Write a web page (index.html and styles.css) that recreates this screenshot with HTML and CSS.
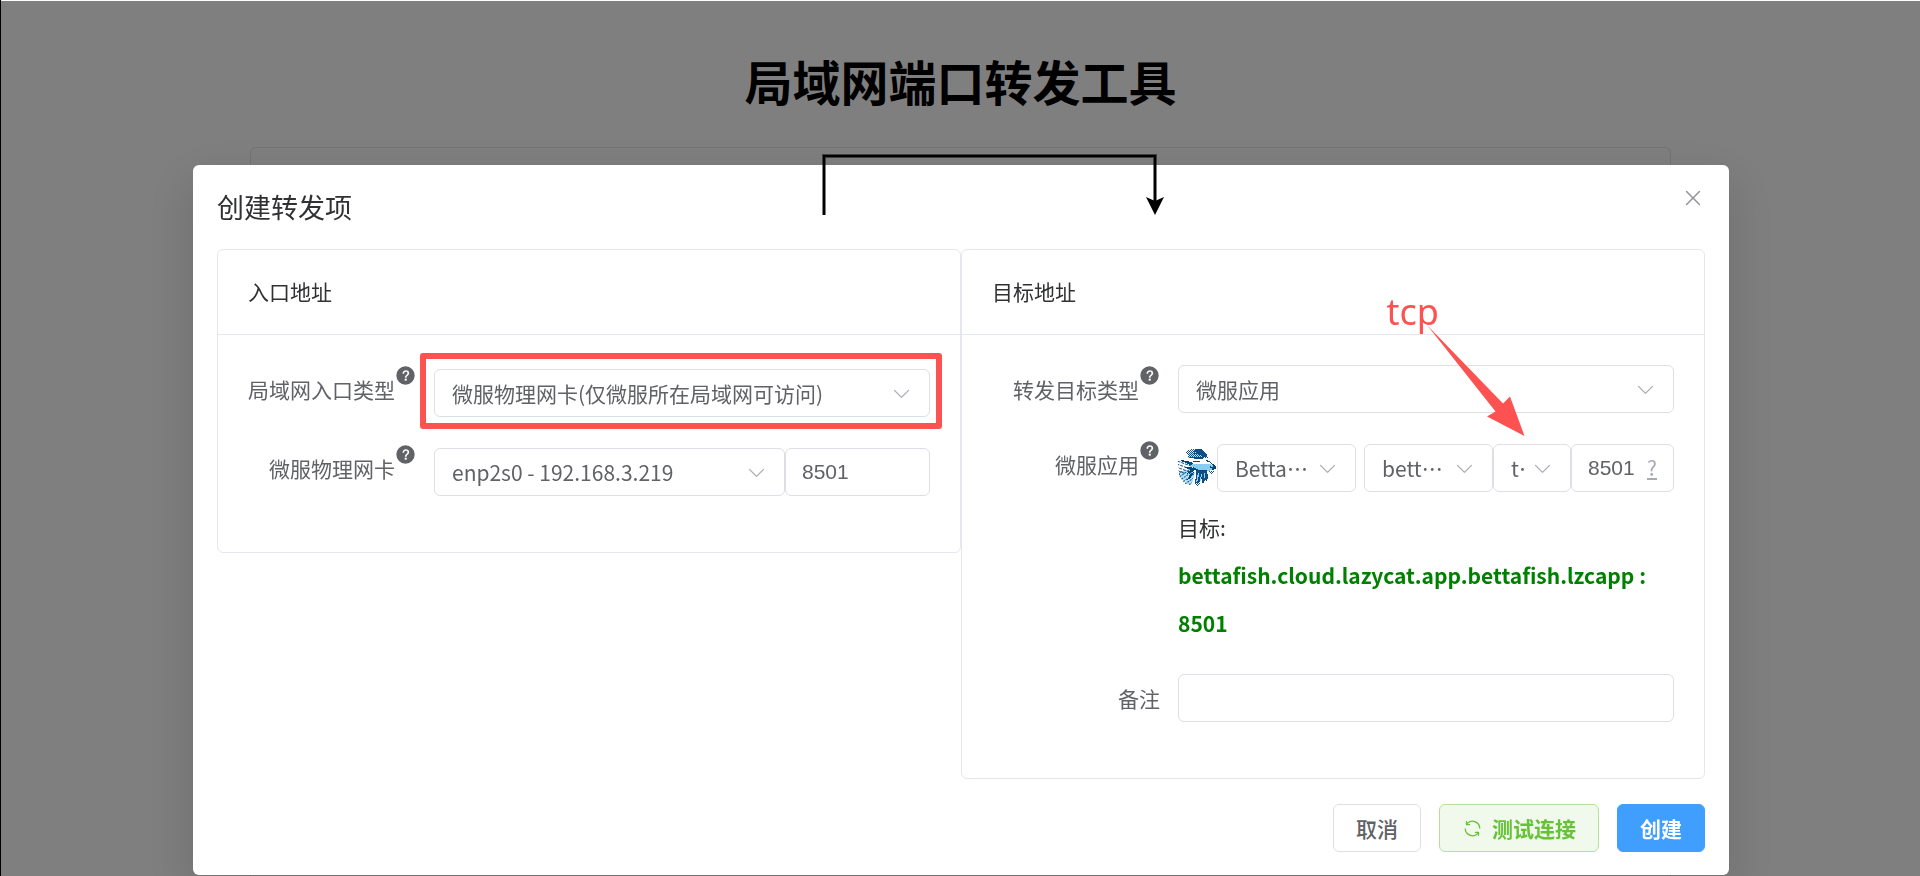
FILE: index.html
```html
<!DOCTYPE html>
<html lang="zh-CN">
<head>
<meta charset="utf-8">
<meta name="viewport" content="width=device-width, initial-scale=1">
<title>局域网端口转发工具</title>
<link rel="stylesheet" href="styles.css">
</head>
<body>
<svg class="defs" aria-hidden="true">
  <symbol id="chevron" viewBox="0 0 1024 1024"><path d="M831.872 340.864 512 652.672 192.128 340.864a30.592 30.592 0 0 0-42.752 0 29.12 29.12 0 0 0 0 41.6L489.664 714.24a32 32 0 0 0 44.672 0l340.288-331.712a29.12 29.12 0 0 0 0-41.728 30.592 30.592 0 0 0-42.752 0z"/></symbol>
  <symbol id="help" viewBox="0 0 1024 1024"><path d="M512 64a448 448 0 1 1 0 896 448 448 0 0 1 0-896m23.744 191.488c-52.096 0-92.928 14.784-123.2 44.352-30.976 29.568-45.76 70.4-45.76 122.496h80.256c0-29.568 5.632-52.8 17.6-68.992 13.376-19.712 35.2-28.864 66.176-28.864 23.936 0 42.944 6.336 56.32 19.712 12.672 13.376 19.712 31.68 19.712 54.912 0 17.6-6.336 34.496-19.008 49.984l-8.448 9.856c-45.76 40.832-73.216 70.4-82.368 89.408-9.856 19.008-14.08 42.24-14.08 68.992v9.856h80.96v-9.856c0-16.896 3.52-31.68 10.56-45.76 6.336-12.672 15.488-24.64 28.16-35.2 33.792-29.568 54.208-48.576 60.544-55.616 16.896-22.528 26.048-51.392 26.048-86.592 0-42.944-14.08-76.736-42.24-101.376-28.16-25.344-65.472-37.312-111.232-37.312m-12.672 406.208a54.272 54.272 0 0 0-38.72 14.784 49.408 49.408 0 0 0-15.488 38.016c0 15.488 4.928 28.16 15.488 38.016A54.848 54.848 0 0 0 523.072 768c15.488 0 28.16-4.928 38.72-14.784a51.52 51.52 0 0 0 16.192-38.72 51.968 51.968 0 0 0-15.488-38.016 55.936 55.936 0 0 0-39.424-14.784z"/></symbol>
</svg>

<main class="page">
  <h1 class="page-title">局域网端口转发工具</h1>
  <div class="page-card"></div>
</main>

<div class="overlay">
  <section class="dialog" role="dialog" aria-labelledby="dialog-title">
    <header class="dialog-header">
      <h2 class="dialog-title" id="dialog-title">创建转发项</h2>
      <button class="close" type="button" aria-label="关闭">
        <svg viewBox="0 0 1024 1024"><path d="M764.288 214.592 512 466.88 259.712 214.592a31.936 31.936 0 0 0-45.12 45.12L466.752 512 214.528 764.224a31.936 31.936 0 1 0 45.12 45.184L512 557.184l252.288 252.288a31.936 31.936 0 0 0 45.12-45.12L557.12 512.064l252.288-252.352a31.936 31.936 0 1 0-45.12-45.184z"/></svg>
      </button>
    </header>

    <form class="panels" id="forward-form">
      <section class="panel">
        <h3 class="panel-title">入口地址</h3>
        <div class="panel-body">
          <div class="row">
            <label class="label" for="entry-type">局域网入口类型<svg class="help"><use href="#help"/></svg></label>
            <div class="control control-low">
              <div class="select marked">
                <select id="entry-type"><option>微服物理网卡(仅微服所在局域网可访问)</option></select>
                <svg class="chevron"><use href="#chevron"/></svg>
              </div>
            </div>
          </div>
          <div class="row">
            <label class="label" for="nic">微服物理网卡<svg class="help"><use href="#help"/></svg></label>
            <div class="control control-low">
              <div class="select">
                <select id="nic"><option>enp2s0 - 192.168.3.219</option></select>
                <svg class="chevron"><use href="#chevron"/></svg>
              </div>
              <input class="input entry-port" type="text" value="8501" aria-label="入口端口">
            </div>
          </div>
        </div>
      </section>

      <section class="panel">
        <h3 class="panel-title">目标地址</h3>
        <div class="panel-body">
          <div class="row">
            <label class="label" for="target-type">转发目标类型<svg class="help"><use href="#help"/></svg></label>
            <div class="control">
              <div class="select">
                <select id="target-type"><option>微服应用</option></select>
                <svg class="chevron"><use href="#chevron"/></svg>
              </div>
            </div>
          </div>
          <div class="row">
            <label class="label" for="app">微服应用<svg class="help"><use href="#help"/></svg></label>
            <div>
              <div class="control control-low">
                <svg class="app-icon" viewBox="0 0 39 39" shape-rendering="crispEdges" aria-hidden="true">
                  <defs>
                    <pattern id="dots" width="2" height="2" patternUnits="userSpaceOnUse"><path fill="#15568c" d="M0 0h1v1H0zM1 1h1v1H1z"/></pattern>
                    <pattern id="hatch" width="4" height="3" patternUnits="userSpaceOnUse" patternTransform="rotate(20)"><path fill="#14558e" d="M0 0h3v1H0z"/></pattern>
                    <pattern id="fan" width="3" height="3" patternUnits="userSpaceOnUse" patternTransform="rotate(-35)"><path fill="#14558e" d="M0 0h2v1H0z"/></pattern>
                  </defs>
                  <path fill="#b4e2f8" d="M1 24 12 21l5 3-3 12-5 0-5-4-3-4z"/>
                  <path fill="#a9dcf6" d="M12 4h12l5 4-4 2H10z"/>
                  <path fill="url(#dots)" d="M8 4 13 1l9 0 6 4 2 5-10 1-9-1z"/>
                  <path fill="#0e4f86" d="M17 1h6l4 3 2 4-3 1-6-3-7 0 6-1-4-2zM10 9h10l9 1-8 1-8-1z"/>
                  <path fill="url(#hatch)" d="M0 12 13 14l4 5-4 5-12 3-1-8z"/>
                  <path fill="url(#fan)" d="M1 24 14 20l2 6-3 11-6-1-5-5z"/>
                  <path fill="#064878" d="M3 12 14 14l2 3-1 1-12-5zM6 19l7 0 4 3-3 2-6 2 5-4zM11 27l5-3-4 7-4 1 3-3z"/>
                  <path fill="#86cdf1" d="M14 16 26 15l8 1 4 3-4 3-10 2-9-3z"/>
                  <path fill="#fff" d="M17 13h13l6 4-7-1-12 0z"/>
                  <path fill="#064878" d="M15 13h7v1h-7zM28 12l3 1 7 5v3l-4 1v-2h-2v-2l2 1 1-1-4-4-4-1zM15 19l6 3 8 0-1 2-7 0-6-3z"/>
                  <path fill="#0e4f86" d="M18 23h11l1 5-1 6-2-3-1 4h-2v-5l-3 5-4 0 1-8z"/>
                  <path fill="#8fd2f3" d="M20 25h1l-1 8-2 1zM23 26h1l-1 7h-1zM26 25h1v5h-1z"/>
                  <path fill="url(#dots)" d="M30 23h7l-3 2 1 4-3-3zM16 35l8 0-4 3z"/>
                </svg>
                <div class="select app-select">
                  <select id="app"><option>Betta…</option></select>
                  <svg class="chevron"><use href="#chevron"/></svg>
                </div>
                <div class="select service-select">
                  <select aria-label="服务"><option>bett…</option></select>
                  <svg class="chevron"><use href="#chevron"/></svg>
                </div>
                <div class="select protocol-select">
                  <select aria-label="协议"><option>t…</option></select>
                  <svg class="chevron"><use href="#chevron"/></svg>
                </div>
                <div class="input port-box">
                  <input type="text" value="8501" aria-label="目标端口">
                  <span class="port-hint">?</span>
                </div>
              </div>
              <p class="target">目标:<br><strong>bettafish.cloud.lazycat.app.bettafish.lzcapp : 8501</strong></p>
            </div>
          </div>
          <div class="row">
            <label class="label" for="remark">备注</label>
            <div class="control"><input class="input" id="remark" type="text"></div>
          </div>
        </div>
        <span class="note">tcp</span>
        <svg class="note-arrow" viewBox="0 0 100 114" aria-hidden="true"><path d="M0 2 76 80.500 83 73.500 97.500 113 60 93.500 68.500 88.500Z"/></svg>
      </section>
    </form>

    <footer class="dialog-footer">
      <button class="btn" type="button">取消</button>
      <button class="btn btn-test" type="button">
        <svg viewBox="0 0 1024 1024"><path d="M771.776 794.88A384 384 0 0 1 128 512h64a320 320 0 0 0 555.712 216.448H654.72a32 32 0 1 1 0-64h149.056a32 32 0 0 1 32 32v148.928a32 32 0 1 1-64 0v-50.56zM276.288 295.616h92.992a32 32 0 0 1 0 64H220.16a32 32 0 0 1-32-32V178.56a32 32 0 0 1 64 0v50.56A384 384 0 0 1 896.128 512h-64a320 320 0 0 0-555.776-216.384z"/></svg>
        测试连接
      </button>
      <button class="btn btn-create" type="submit" form="forward-form">创建</button>
    </footer>

    <svg class="flow-arrow" viewBox="0 0 344 64" aria-hidden="true">
      <path class="flow-edge" d="M4 63V4H335V50"/>
      <path class="flow-line" d="M4 63V4H335V50"/>
      <path d="M326 45 335 49 344 45 335 63Z"/>
    </svg>
  </section>
</div>
</body>
</html>
```
FILE: styles.css
```css
* { box-sizing: border-box; }

body {
  margin: 0;
  background: #fff;
  color: #303133;
  font-family: "Noto Sans CJK SC", sans-serif;
  font-size: 21px;
}

h1, h2, h3, p { margin: 0; }

.defs { display: none; }

/* Page behind the dialog */
.page {
  display: flex;
  flex-direction: column;
  height: 100vh;
  padding-top: 44px;
  border-left: 1px solid #000;
}

.page-title {
  color: #000;
  font-size: 48px;
  line-height: 72px;
  font-weight: 700;
  text-align: center;
}

.page-card {
  flex: 1;
  width: 74%;
  margin: 31px auto 0;
  border: 1px solid #e4e7ed;
  border-bottom: 0;
  border-radius: 6px 6px 0 0;
}

.overlay {
  position: fixed;
  inset: 1px 0 0 1px;
  overflow: hidden;
  padding-top: 164px;
  background: rgba(0, 0, 0, 0.5);
}

/* Dialog */
.dialog {
  position: relative;
  width: 80vw;
  margin-left: 10vw;
  padding: 24px 24px 23px;
  border-radius: 6px;
  background: #fff;
  box-shadow: 0 18px 48px 6px rgba(0, 0, 0, 0.12);
}

.dialog-header {
  display: flex;
  justify-content: space-between;
  align-items: flex-start;
  padding-bottom: 24px;
}

.dialog-title {
  font-size: 27px;
  line-height: 36px;
  font-weight: 400;
}

.close {
  display: flex;
  margin-top: -3px;
  padding: 0;
  border: 0;
  background: none;
  fill: #909399;
}

.close svg { width: 24px; height: 24px; }

.panels {
  display: grid;
  grid-template-columns: 1fr 1fr;
  align-items: start;
}

.panel {
  position: relative;
  border: 1px solid #e4e7ed;
  border-radius: 6px;
}

.panel-title {
  padding: 26px 30px 28px;
  border-bottom: 1px solid #e4e7ed;
  font-size: 21px;
  line-height: 30px;
  font-weight: 400;
}

.panel-body {
  display: flex;
  flex-direction: column;
  gap: 27px;
  padding: 30px 30px 56px;
}

.row {
  display: grid;
  grid-template-columns: 186px 1fr;
}

.label {
  display: flex;
  justify-content: flex-end;
  padding-right: 18px;
  color: #606266;
  line-height: 48px;
  white-space: nowrap;
}

.help {
  width: 21px;
  height: 21px;
  fill: #606266;
}

.control { display: flex; }
.control-low { padding-top: 4px; }

.select {
  position: relative;
  flex: 1;
  min-width: 0;
}

.select select {
  display: block;
  width: 100%;
  height: 48px;
  padding: 0 54px 0 17px;
  appearance: none;
  border: 1px solid #dcdfe6;
  border-radius: 6px;
  background: #fff;
  color: #606266;
  font: inherit;
}

.chevron {
  position: absolute;
  top: 14px;
  right: 18px;
  width: 21px;
  height: 21px;
  fill: #a8abb2;
  pointer-events: none;
}

.marked::after {
  content: "";
  position: absolute;
  inset: -16px -12px -12px -14px;
  border: 6px solid #fc5252;
  border-radius: 3px;
  pointer-events: none;
}

.input {
  width: 100%;
  height: 48px;
  padding: 0 16px;
  border: 1px solid #dcdfe6;
  border-radius: 6px;
  background: #fff;
  color: #606266;
  font-family: "Liberation Sans", sans-serif;
  font-size: 21px;
}

.entry-port { width: 145px; }

.app-icon {
  flex: none;
  width: 39px;
  height: 39px;
  margin-top: 4px;
}

.app-select { flex: 139; margin-right: 8px; }
.service-select { flex: 129; }
.protocol-select { flex: 78; }
.app-select select,
.service-select select { padding-right: 44px; }
.protocol-select select { padding-right: 46px; }

.port-box {
  display: flex;
  flex: none;
  align-items: center;
  width: 103px;
}

.port-box input {
  flex: 1;
  min-width: 0;
  padding: 0;
  border: 0;
  background: none;
  color: inherit;
  font: inherit;
}

.port-hint {
  border-bottom: 2px solid #a8abb2;
  color: #a8abb2;
  font-family: "Noto Sans CJK SC", sans-serif;
  line-height: 21px;
}

.target {
  padding-top: 11px;
  line-height: 48px;
}

.target strong { color: #008000; }

/* Annotations laid over the form */
.note {
  position: absolute;
  top: 38px;
  right: 265px;
  color: #fc5252;
  font-family: "Noto Sans", sans-serif;
  font-size: 36px;
  line-height: 48px;
}

.note-arrow {
  position: absolute;
  top: 73px;
  right: 177px;
  width: 100px;
  height: 114px;
  fill: #fc5252;
}

.flow-arrow {
  position: absolute;
  top: -13px;
  left: 627px;
  width: 344px;
  height: 64px;
}

.flow-edge,
.flow-line { fill: none; stroke: #000; }
.flow-edge { stroke-width: 4; opacity: 0.5; }
.flow-line { stroke-width: 2; }

/* Footer */
.dialog-footer {
  display: flex;
  justify-content: flex-end;
  gap: 18px;
  padding-top: 25px;
}

.btn {
  display: flex;
  align-items: center;
  gap: 9px;
  height: 48px;
  padding: 0 22px;
  border: 1px solid #dcdfe6;
  border-radius: 6px;
  background: #fff;
  color: #606266;
  font: inherit;
  font-weight: 500;
}

.btn svg { width: 21px; height: 21px; fill: currentColor; }

.btn-test {
  border-color: #b3e19d;
  background: #f0f9eb;
  color: #67c23a;
  font-weight: 700;
}

.btn-create {
  border-color: #409eff;
  background: #409eff;
  color: #fff;
  font-weight: 700;
}
```
